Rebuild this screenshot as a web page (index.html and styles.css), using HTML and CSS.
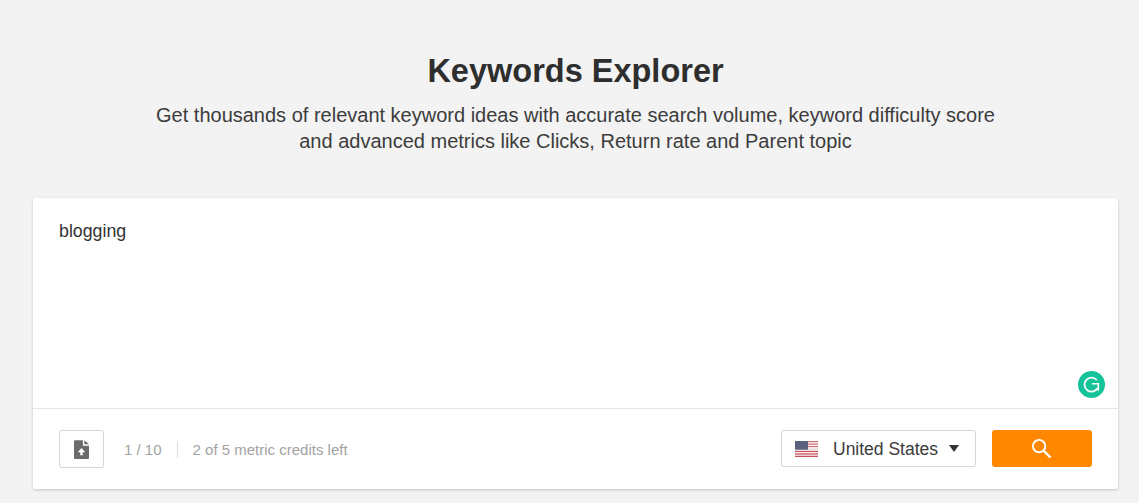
FILE: index.html
```html
<!DOCTYPE html>
<html lang="en">

<head>
    <meta charset="UTF-8">
    <meta name="viewport" content="width=device-width, initial-scale=1.0">
    <title>Keywords Explorer</title>
    <link rel="stylesheet" href="styles.css">
</head>

<body>
    <div class="intro">
        <h1>Keywords Explorer</h1>
        <p>Get thousands of relevant keyword ideas with accurate search volume, keyword difficulty score<br>and advanced metrics like Clicks, Return rate and Parent topic</p>
    </div>

    <div class="card">
        <div class="input-area">
            <div class="keywords">blogging</div>
            <svg class="grammarly" width="27" height="27" viewBox="0 0 27 27">
                <circle cx="13.5" cy="13.5" r="13.5" fill="#15c39a" />
                <path d="M18.800 9A7 7 0 1 0 19.500 17.300" fill="none" stroke="#fff" stroke-width="1.800" />
                <path d="M14 12.800h6.300v7" fill="none" stroke="#fff" stroke-width="1.600" />
            </svg>
        </div>

        <div class="toolbar">
            <button class="upload-btn" type="button">
                <svg width="15" height="19" viewBox="0 0 16 20">
                    <path d="M1 0h8.500v6H16v13a1 1 0 0 1-1 1H1a1 1 0 0 1-1-1V1a1 1 0 0 1 1-1z" fill="#6b6b6b" />
                    <path d="M11 0l5 4.500h-5z" fill="#6b6b6b" />
                    <path d="M8 8.500l4 4.300H9.300V16H6.700v-3.200H4z" fill="#fff" />
                </svg>
            </button>
            <span class="count">1 / 10</span>
            <span class="credits">2 of 5 metric credits left</span>

            <div class="country">
                <svg class="flag" width="23" height="16" viewBox="0 0 23 16">
                    <rect width="23" height="16" fill="#fff" />
                    <rect y="0" width="23" height="1.300" fill="#d0747c" />
                    <rect y="2.500" width="23" height="1.300" fill="#d0747c" />
                    <rect y="4.900" width="23" height="1.300" fill="#d0747c" />
                    <rect y="7.400" width="23" height="1.300" fill="#d8d8d8" />
                    <rect y="9.800" width="23" height="1.300" fill="#c8515c" />
                    <rect y="12.300" width="23" height="1.300" fill="#c8515c" />
                    <rect y="14.700" width="23" height="1.300" fill="#c8515c" />
                    <rect width="13" height="8.700" fill="#5a6280" />
                </svg>
                <span class="country-name">United States</span>
                <span class="caret"></span>
            </div>

            <button class="search-btn" type="button">
                <svg class="search-icon" width="21" height="21" viewBox="0 0 22 22">
                    <circle cx="8.500" cy="8.500" r="6.500" fill="none" stroke="#fff" stroke-width="2" />
                    <path d="M13.500 13.500L20.500 20.500" stroke="#fff" stroke-width="2.400" />
                </svg>
            </button>
        </div>
    </div>
</body>

</html>
```

FILE: styles.css
```css
body {
    margin: 0;
    height: 503px;
    overflow: hidden;
    background-color: #f3f3f3;
    font-family: "Liberation Sans", Arial, sans-serif;
    color: #333;
}

.intro {
    padding-top: 50px;
    padding-left: 12px;
    text-align: center;
}

h1 {
    margin: 0;
    font-size: 32.5px;
    line-height: 42px;
    font-weight: bold;
    color: #2e2e2e;
}

.intro p {
    margin: 10px 0 0;
    font-size: 20px;
    line-height: 26px;
    color: #3c3c3c;
}

.card {
    margin: 44px 21px 0 33px;
    background-color: #fff;
    border-radius: 2px;
    box-shadow: 0 1px 3px rgba(0, 0, 0, 0.2);
}

.input-area {
    position: relative;
    height: 211px;
    padding: 23px 26px 0;
    box-sizing: border-box;
    border-bottom: 1px solid #e6e6e6;
}

.keywords {
    font-size: 17.8px;
    line-height: 20px;
    color: #333;
}

.grammarly {
    position: absolute;
    right: 13px;
    bottom: 10px;
}

.toolbar {
    display: flex;
    align-items: center;
    height: 80px;
    padding: 0 26px;
}

.upload-btn {
    display: flex;
    align-items: center;
    justify-content: center;
    width: 45px;
    height: 38px;
    padding: 0;
    background-color: #fff;
    border: 1px solid #d5d5d5;
    border-radius: 3px;
}

.count,
.credits {
    font-size: 15px;
    line-height: 17px;
    color: #a3a3a3;
}

.count {
    margin-left: 20px;
    padding-right: 15px;
    border-right: 1px solid #ddd;
}

.credits {
    margin-left: 15px;
}

.country {
    display: flex;
    align-items: center;
    width: 195px;
    height: 37px;
    margin-left: auto;
    margin-bottom: 1px;
    padding-left: 13px;
    box-sizing: border-box;
    border: 1px solid #d5d5d5;
    border-radius: 3px;
}

.country-name {
    margin-top: 2px;
    margin-left: 15px;
    font-size: 17.5px;
    color: #3a3a3a;
}

.caret {
    margin-left: 11px;
    border-left: 5px solid transparent;
    border-right: 5px solid transparent;
    border-top: 7px solid #333;
}

.search-btn {
    display: flex;
    align-items: center;
    justify-content: center;
    width: 100px;
    height: 37px;
    margin-left: 16px;
    margin-bottom: 1px;
    padding: 0 2px 0 0;
    background-color: #ff8800;
    border: none;
    border-radius: 3px;
}
```
